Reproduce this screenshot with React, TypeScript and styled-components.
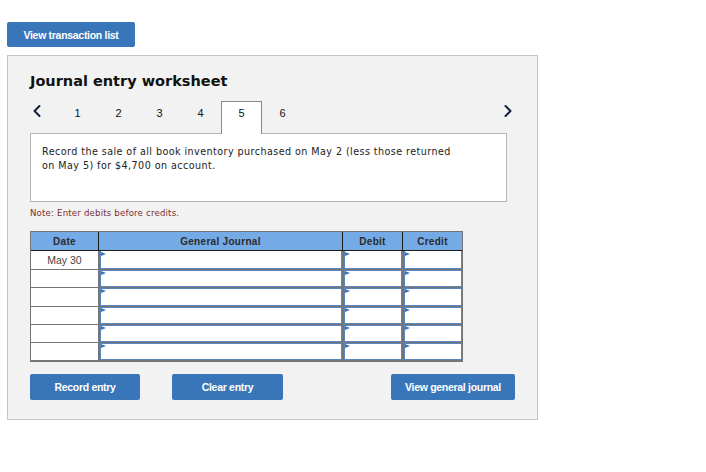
import React from 'react';
import styled, { createGlobalStyle } from 'styled-components';
import { ChevronLeft, ChevronRight } from 'lucide-react';

const GlobalStyle = createGlobalStyle`
  html, body {
    margin: 0;
    padding: 0;
    background: #fff;
  }
`;

const Page = styled.div`
  width: 706px;
  height: 472px;
  box-sizing: border-box;
  padding: 22px 0 0 7px;
  overflow: hidden;
`;

const Button = styled.button<{ $w: number; $h: number }>`
  display: block;
  width: ${(p) => p.$w}px;
  height: ${(p) => p.$h}px;
  padding: 0;
  border: none;
  border-radius: 2px;
  background: #3975b9;
  color: #fff;
  font-family: 'Liberation Sans', Arial, sans-serif;
  font-size: 10.5px;
  font-weight: 700;
  letter-spacing: -0.3px;
`;

const Panel = styled.div`
  box-sizing: border-box;
  width: 531px;
  height: 365px;
  margin-top: 8px;
  padding: 15px 22px 0;
  background: #f2f2f2;
  border: 1px solid #c4c4c4;
`;

const Title = styled.h2`
  margin: 0;
  height: 30px;
  font-family: 'DejaVu Sans', Verdana, sans-serif;
  font-size: 14.5px;
  line-height: 20px;
  font-weight: 700;
  color: #111;
`;

const TabRow = styled.div`
  display: flex;
  align-items: flex-start;
  height: 32px;
  width: 484px;
  color: #111;
`;

const Arrow = styled.span<{ $right?: boolean }>`
  display: flex;
  width: 28px;
  height: 20px;
  margin-left: ${(p) => (p.$right ? 'auto' : '-7px')};
  margin-right: ${(p) => (p.$right ? '-8px' : '6px')};
  justify-content: center;
  color: #10203a;
`;

const Tab = styled.span<{ $active?: boolean }>`
  box-sizing: border-box;
  width: 41px;
  height: 33px;
  text-align: center;
  font-family: 'Liberation Sans', Arial, sans-serif;
  font-size: 11px;
  line-height: 22px;
  position: relative;
  z-index: 1;
  border: 1px solid ${(p) => (p.$active ? '#8a8a8a' : 'transparent')};
  border-bottom: none;
  background: ${(p) => (p.$active ? '#fff' : 'transparent')};
`;

const Prompt = styled.div`
  box-sizing: border-box;
  width: 477px;
  height: 69px;
  padding: 11px 11px 0;
  background: #fff;
  border: 1px solid #b5b5b5;
  font-family: 'DejaVu Sans', Verdana, sans-serif;
  font-size: 9.6px;
  line-height: 14px;
  letter-spacing: 0.43px;
  color: #222;
`;

const Note = styled.div`
  margin-top: 5px;
  height: 24px;
  font-family: 'DejaVu Sans', Verdana, sans-serif;
  font-size: 8.6px;
  line-height: 12px;
  letter-spacing: 0.18px;
  color: #7a2f2f;
`;

const Sheet = styled.div`
  width: 433px;
  box-sizing: border-box;
  border: 1px solid #757575;
`;

const Row = styled.div<{ $h: number }>`
  display: grid;
  grid-template-columns: 68px 244px 60px 59px;
  height: ${(p) => p.$h}px;
`;

const Head = styled.div`
  display: flex;
  align-items: center;
  justify-content: center;
  background: #74aae6;
  border-right: 1px solid #1a1a1a;
  border-bottom: 1px solid #1a1a1a;
  font-family: 'Liberation Sans', Arial, sans-serif;
  font-size: 10px;
  font-weight: 700;
  letter-spacing: 0.3px;
  color: #2b2b2b;

  &:last-child {
    border-right: none;
  }
`;

const DateCell = styled.div`
  display: flex;
  align-items: center;
  justify-content: center;
  background: #fff;
  border-bottom: 1px solid #757575;
  border-right: 1px solid #757575;
  font-family: 'Liberation Sans', Arial, sans-serif;
  font-size: 10.5px;
  color: #444;
`;

const InputCell = styled.div<{ $first?: boolean }>`
  position: relative;
  box-sizing: border-box;
  background: #fff;
  border-left: 1px solid #757575;
  border-right: 1px solid #757575;
  border-bottom: 1px solid #757575;
  box-shadow:
    inset 1px 0 0 #5b86bd,
    inset -1px 0 0 #5b86bd,
    inset 0 -1px 0 #5b86bd
    ${(p) => (p.$first ? '' : ', inset 0 1px 0 #5b86bd')};

  &:last-child {
    border-right: none;
  }

  &::before {
    content: '';
    position: absolute;
    left: 1px;
    top: 1px;
    border-left: 5px solid #3975b9;
    border-top: 2.5px solid transparent;
    border-bottom: 2.5px solid transparent;
  }
`;

const Actions = styled.div`
  display: flex;
  width: 485px;
  gap: 32px;
  margin-top: 12px;

  & > :last-child {
    margin-left: auto;
  }
`;

const tabs = [1, 2, 3, 4, 5, 6];
const rowHeights = [19, 18, 19, 18, 18, 18];

const App: React.FC = () => {
  return (
    <Page>
      <GlobalStyle />
      <Button $w={128} $h={25}>View transaction list</Button>
      <Panel>
        <Title>Journal entry worksheet</Title>
        <TabRow>
          <Arrow><ChevronLeft size={20} strokeWidth={2.4} /></Arrow>
          {tabs.map((n) => (
            <Tab key={n} $active={n === 5}>{n}</Tab>
          ))}
          <Arrow $right><ChevronRight size={20} strokeWidth={2.4} /></Arrow>
        </TabRow>
        <Prompt>
          Record the sale of all book inventory purchased on May 2 (less those returned
          <br />
          on May 5) for $4,700 on account.
        </Prompt>
        <Note>Note: Enter debits before credits.</Note>
        <Sheet>
          <Row $h={19}>
            <Head>Date</Head>
            <Head>General Journal</Head>
            <Head>Debit</Head>
            <Head>Credit</Head>
          </Row>
          {rowHeights.map((h, i) => (
            <Row key={i} $h={h}>
              <DateCell>{i === 0 ? 'May 30' : ''}</DateCell>
              <InputCell $first={i === 0} />
              <InputCell $first={i === 0} />
              <InputCell $first={i === 0} />
            </Row>
          ))}
        </Sheet>
        <Actions>
          <Button $w={110} $h={26}>Record entry</Button>
          <Button $w={111} $h={26}>Clear entry</Button>
          <Button $w={124} $h={26}>View general journal</Button>
        </Actions>
      </Panel>
    </Page>
  );
};

export default App;
